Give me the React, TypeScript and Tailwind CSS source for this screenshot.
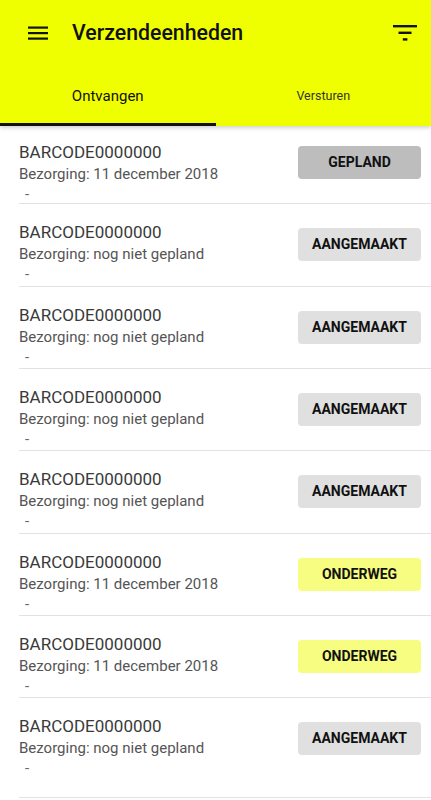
import React, { useState } from 'react';

type Status = 'GEPLAND' | 'AANGEMAAKT' | 'ONDERWEG';

interface Unit {
  barcode: string;
  delivery: string;
  status: Status;
}

const units: Unit[] = [
  { barcode: 'BARCODE0000000', delivery: '11 december 2018', status: 'GEPLAND' },
  { barcode: 'BARCODE0000000', delivery: 'nog niet gepland', status: 'AANGEMAAKT' },
  { barcode: 'BARCODE0000000', delivery: 'nog niet gepland', status: 'AANGEMAAKT' },
  { barcode: 'BARCODE0000000', delivery: 'nog niet gepland', status: 'AANGEMAAKT' },
  { barcode: 'BARCODE0000000', delivery: 'nog niet gepland', status: 'AANGEMAAKT' },
  { barcode: 'BARCODE0000000', delivery: '11 december 2018', status: 'ONDERWEG' },
  { barcode: 'BARCODE0000000', delivery: '11 december 2018', status: 'ONDERWEG' },
  { barcode: 'BARCODE0000000', delivery: 'nog niet gepland', status: 'AANGEMAAKT' },
];

// row heights (incl. divider) so the dividers land where the list has them
const rowStyles = [
  'h-[78px] pt-[15px]',
  'h-[83px] pt-[17px]',
  'h-[82px] pt-[17px]',
  'h-[82px] pt-[17px]',
  'h-[83px] pt-[17px]',
  'h-[82px] pt-[17px]',
  'h-[82px] pt-[17px]',
  'h-[100px] pt-[17px]',
];

const statusColors: Record<Status, string> = {
  GEPLAND: 'bg-[#bdbdbd]',
  AANGEMAAKT: 'bg-[#e0e0e0]',
  ONDERWEG: 'bg-[#f6fd80]',
};

function MenuIcon() {
  return (
    <svg width="20" height="14" viewBox="0 0 20 14" fill="#111">
      <rect x="0" y="0.5" width="20" height="2.2" />
      <rect x="0" y="6" width="20" height="2.2" />
      <rect x="0" y="11.5" width="20" height="2.2" />
    </svg>
  );
}

function FilterIcon() {
  return (
    <svg width="24" height="16" viewBox="0 0 24 16" fill="#111">
      <rect x="0" y="0" width="24" height="2.4" />
      <rect x="5.5" y="6.6" width="13" height="2.4" />
      <rect x="9.8" y="13.2" width="4.6" height="2.4" />
    </svg>
  );
}

function UnitRow({ unit, index }: { unit: Unit; index: number }) {
  return (
    <div className={`ml-[19px] flex items-start justify-between border-b border-[#e2e2e2] pr-[10px] ${rowStyles[index]}`}>
      <div className="flex flex-col">
        <span className="text-[17px] leading-[22px] text-[#3a3a3a]">{unit.barcode}</span>
        <span className="text-[15px] leading-[22px] text-[#555555]">Bezorging: {unit.delivery}</span>
        <span className="pl-[6px] text-[15px] leading-[18px] text-[#666666]">-</span>
      </div>
      <button
        className={`flex h-[33px] w-[123px] items-center justify-center rounded-[4px] text-[14px] font-bold text-[#111111] ${
          index === 0 ? 'mt-[5px]' : 'mt-[7px]'
        } ${statusColors[unit.status]}`}
      >
        {unit.status}
      </button>
    </div>
  );
}

export default function App() {
  const [activeTab, setActiveTab] = useState(0);

  return (
    <div className="min-h-screen bg-white font-['Roboto',sans-serif]">
      <header className="relative z-10 bg-[#f0ff00] shadow-[0_2px_4px_rgba(0,0,0,0.18)]">
        <div className="flex h-[66px] items-center pl-[28px] pr-[14px]">
          <MenuIcon />
          <h1 className="ml-[24px] flex-1 text-[21.3px] font-medium text-[#111111]">Verzendeenheden</h1>
          <FilterIcon />
        </div>
        <div className="grid h-[60px] grid-cols-2">
          {['Ontvangen', 'Versturen'].map((tab, i) => (
            <button
              key={tab}
              onClick={() => setActiveTab(i)}
              className={`flex flex-col items-center justify-center border-b-[3px] ${
                activeTab === i ? 'border-[#111111] text-[15px] text-[#111111]' : 'border-transparent text-[12.5px] text-[#333333]'
              }`}
            >
              <span className="mt-[3px]">{tab}</span>
            </button>
          ))}
        </div>
      </header>

      <main>
        {units.map((unit, i) => (
          <UnitRow key={i} unit={unit} index={i} />
        ))}
      </main>
    </div>
  );
}
